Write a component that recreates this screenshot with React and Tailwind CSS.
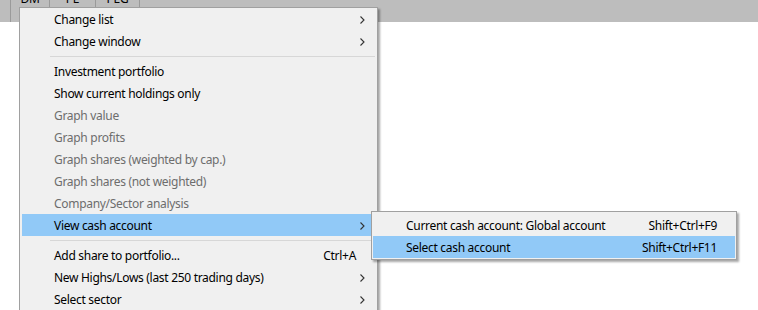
import React from 'react';

const mainItems = [
  { label: 'Change list', sub: true },
  { label: 'Change window', sub: true },
  { sep: true },
  { label: 'Investment portfolio' },
  { label: 'Show current holdings only' },
  { label: 'Graph value', disabled: true },
  { label: 'Graph profits', disabled: true },
  { label: 'Graph shares (weighted by cap.)', disabled: true },
  { label: 'Graph shares (not weighted)', disabled: true },
  { label: 'Company/Sector analysis', disabled: true },
  { label: 'View cash account', sub: true, active: true },
  { sep: true },
  { label: 'Add share to portfolio...', shortcut: 'Ctrl+A' },
  { label: 'New Highs/Lows (last 250 trading days)', sub: true },
  { label: 'Select sector', sub: true },
];

const cashItems = [
  { label: 'Current cash account: Global account', shortcut: 'Shift+Ctrl+F9' },
  { label: 'Select cash account', shortcut: 'Shift+Ctrl+F11', active: true },
];

const Chevron = () => (
  <svg width="5" height="8" viewBox="0 0 5 8" className="shrink-0">
    <path d="M0.5 0.5 L4 4 L0.5 7.5" fill="none" stroke="#333" strokeWidth="1.1" />
  </svg>
);

const MenuRow = ({ item }) => {
  if (item.sep) {
    return (
      <div className="h-[8px] flex items-center pl-[28px]">
        <div className="h-px w-full bg-[#d7d7d7]" />
      </div>
    );
  }
  return (
    <div
      className={`h-[22px] flex items-center pt-[2px] pl-[32px] pr-[10px] ${
        item.active ? 'bg-[#91c9f7]' : ''
      } ${item.disabled ? 'text-[#6d6d6d]' : 'text-black'}`}
    >
      <span className="flex-1 whitespace-nowrap">{item.label}</span>
      {item.shortcut && <span className="mr-[9px] whitespace-nowrap">{item.shortcut}</span>}
      {item.sub && <Chevron />}
    </div>
  );
};

const App = () => {
  return (
    <div className="relative w-[758px] h-[310px] bg-white overflow-hidden font-['Noto_Sans',sans-serif] text-[12px] tracking-[-0.3px]">
      {/* column headers, scrolled so only the bottom of the captions shows */}
      <div className="h-[22px] bg-[#bdbdbd] flex overflow-hidden">
        <div className="w-[11px] border-r border-[#9a9a9a]" />
        <div className="w-[39px] border-r border-[#9a9a9a] text-center leading-[12px] -mt-[7px] h-[29px]">DM</div>
        <div className="w-[46px] border-r border-[#9a9a9a] text-center leading-[12px] -mt-[7px] h-[29px]">PE</div>
        <div className="w-[44px] border-r border-[#9a9a9a] text-center leading-[12px] -mt-[7px] h-[29px]">PEG</div>
        <div className="flex-1" />
      </div>

      {/* context menu */}
      <div className="absolute left-[19px] top-[7px] w-[359px] h-[320px] bg-[#f0f0f0] border border-[#a0a0a0] px-[2px] shadow-[2px_2px_2px_rgba(0,0,0,0.35)]">
        {mainItems.map((item, i) => (
          <MenuRow key={i} item={item} />
        ))}
      </div>

      {/* cash account submenu */}
      <div className="absolute left-[371px] top-[211px] w-[366px] bg-[#f0f0f0] border border-[#a0a0a0] px-[1px] pt-[2px] pb-[1px] shadow-[2px_2px_2px_rgba(0,0,0,0.35)]">
        {cashItems.map((item, i) => (
          <div
            key={i}
            className={`h-[22px] flex items-center pt-[2px] pl-[33px] pr-[18px] text-black ${
              item.active ? 'bg-[#91c9f7]' : ''
            }`}
          >
            <span className="flex-1 whitespace-nowrap">{item.label}</span>
            <span className="whitespace-nowrap">{item.shortcut}</span>
          </div>
        ))}
      </div>
    </div>
  );
};

export default App;
